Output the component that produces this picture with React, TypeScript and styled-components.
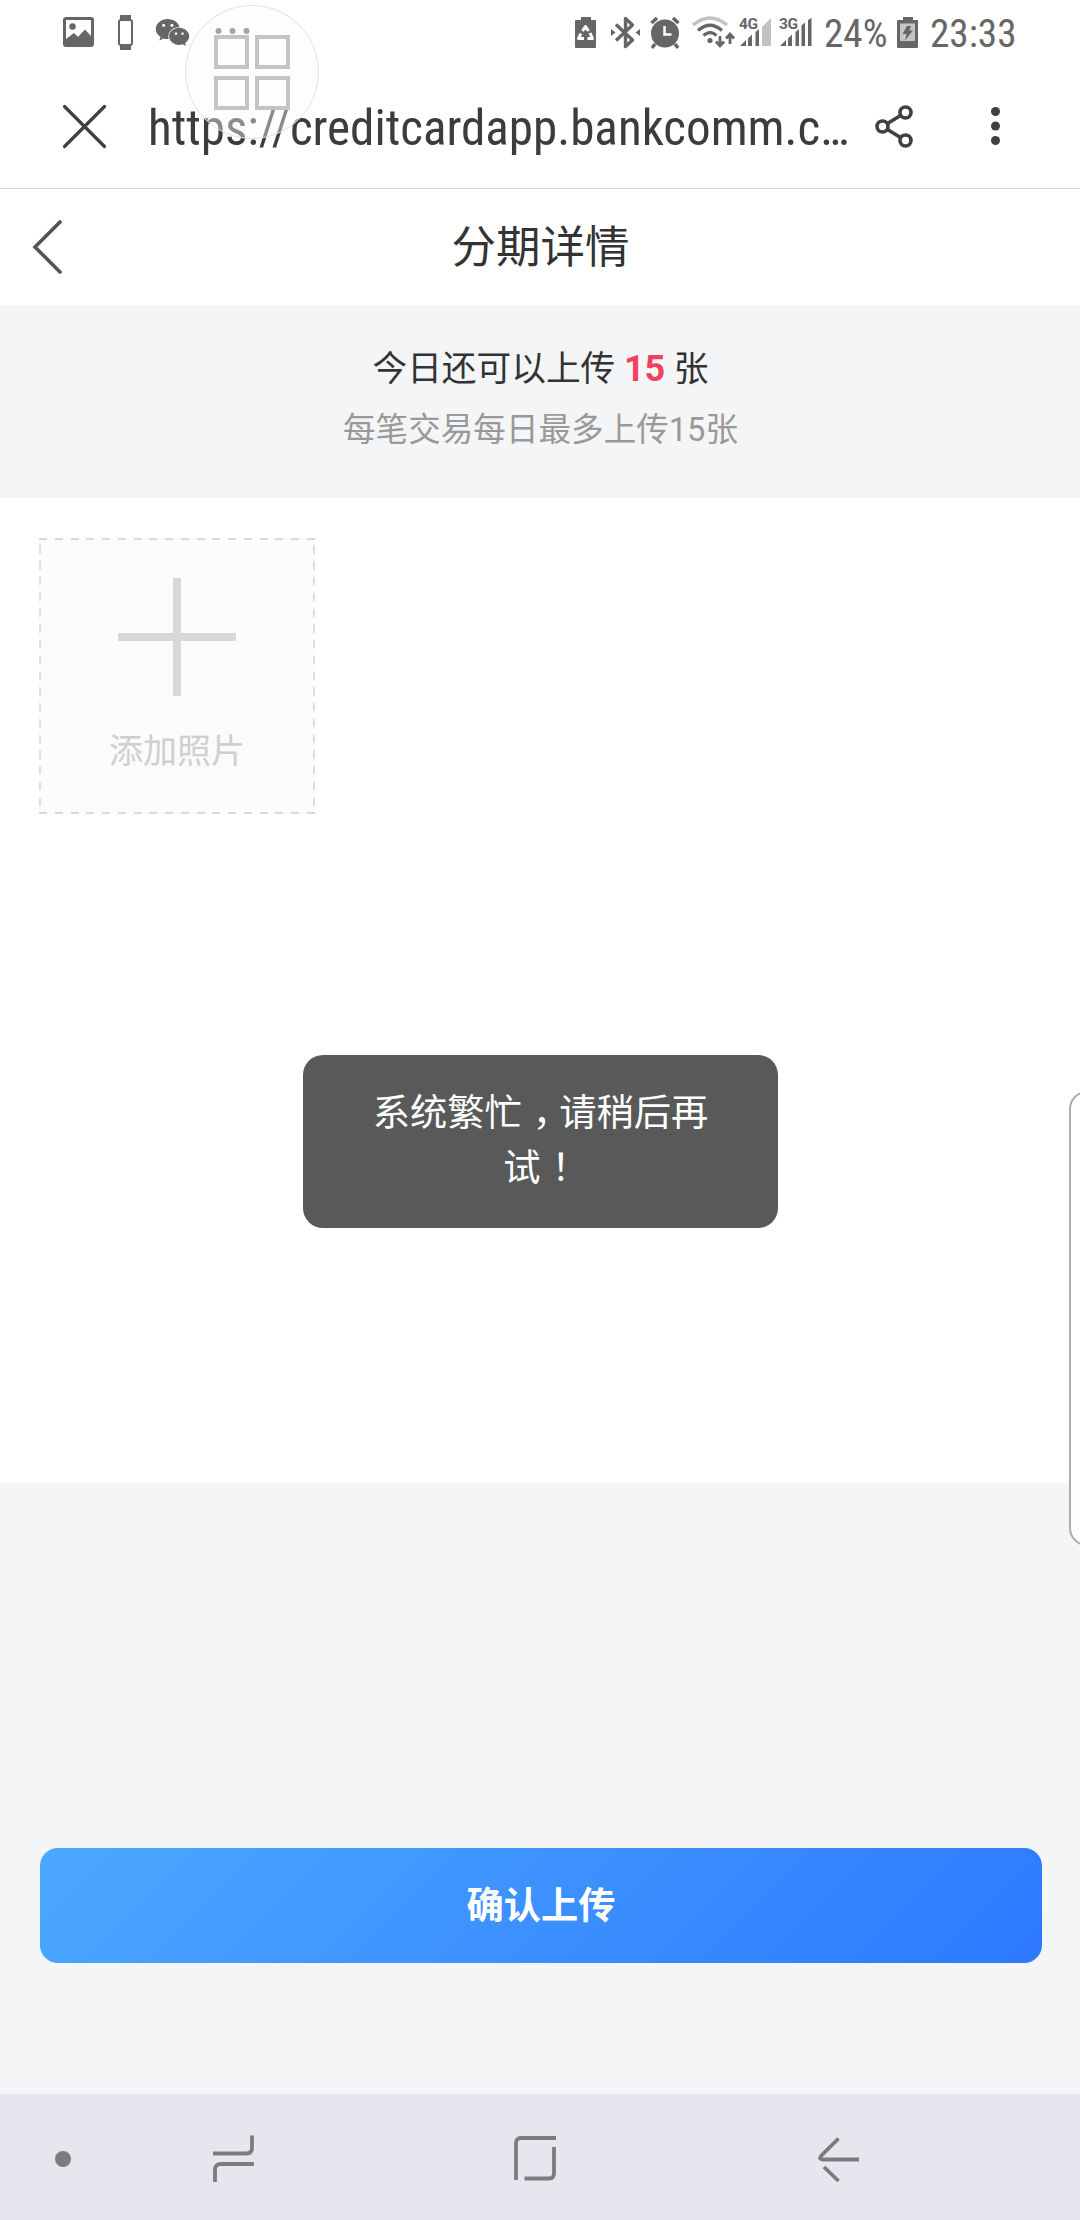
import type { ReactNode } from "react";
import styled, { createGlobalStyle } from "styled-components";
import { FaWeixin } from "react-icons/fa";

const GlobalStyle = createGlobalStyle`
  * {
    box-sizing: border-box;
  }

  body {
    margin: 0;
    background: #f4f5f7;
    font-family: Roboto, "Noto Sans CJK SC", sans-serif;
  }
`;

const Screen = styled.div`
  position: relative;
  display: flex;
  flex-direction: column;
  width: 1080px;
  height: 2220px;
  overflow: hidden;
  background: #f4f5f7;
`;

const StatusBar = styled.div`
  display: flex;
  align-items: center;
  height: 64px;
  padding: 0 68px 0 63px;
  background: #fff;
  color: #666;
`;

const IconBox = styled.span<{ $gap?: number }>`
  display: flex;
  flex: none;
  margin-left: ${({ $gap }) => $gap ?? 0}px;
`;

const Spacer = styled.div`
  flex: 1;
`;

const StatusText = styled.span<{ $width: number; $gap: number }>`
  flex: none;
  width: ${({ $width }) => $width}px;
  margin-left: ${({ $gap }) => $gap}px;
  padding-top: 3px;
  font-family: "Roboto Condensed", Roboto, sans-serif;
  font-stretch: 75%;
  font-size: 39.2px;
  line-height: 64px;
  white-space: nowrap;
`;

const AddressBar = styled.div`
  display: flex;
  align-items: center;
  height: 125px;
  padding: 0 79px 0 63px;
  border-bottom: 1px solid #d6d6d6;
  background: #fff;
  color: #404040;
`;

const Url = styled.div`
  flex: none;
  width: 703px;
  margin-left: 42px;
  padding-top: 4px;
  font-family: "Roboto Condensed", Roboto, sans-serif;
  font-stretch: 75%;
  font-size: 49.1px;
  line-height: 60px;
  white-space: nowrap;
  color: #3c3c3c;
`;

const PageHeader = styled.header`
  display: grid;
  grid-template-columns: 66px 1fr 66px;
  align-items: center;
  height: 116px;
  background: #fff;
`;

const BackButton = styled.button`
  display: flex;
  justify-content: flex-end;
  padding: 0 4px 0 0;
  border: none;
  background: none;
`;

const Title = styled.h1`
  margin: 0;
  padding: 1px 0 0 1px;
  font-size: 44.5px;
  font-weight: 400;
  line-height: 60px;
  text-align: center;
  color: #333;
`;

const Notice = styled.section`
  height: 193px;
  padding: 34px 0 0 1px;
  text-align: center;
`;

const Quota = styled.p`
  margin: 0;
  font-size: 34.7px;
  line-height: 60px;
  color: #333;

  strong {
    font-weight: 700;
    font-size: 36px;
    color: #f0425f;
  }
`;

const QuotaHint = styled.p`
  margin: 1px 0 0;
  font-size: 32.6px;
  line-height: 60px;
  color: #999;
`;

const PhotoPanel = styled.section`
  height: 985px;
  padding: 40px 39px;
  background: #fff;
`;

const AddTile = styled.button`
  display: flex;
  flex-direction: column;
  align-items: center;
  width: 276px;
  height: 276px;
  padding: 40px 0 0;
  border: none;
  color: #cfcfcf;
  font-family: inherit;
  background:
    repeating-linear-gradient(90deg, #d9d9d9 0 8px, transparent 8px 15.76px) 0 0 / 100% 2px no-repeat,
    repeating-linear-gradient(90deg, #d9d9d9 0 8px, transparent 8px 15.76px) 0 100% / 100% 2px no-repeat,
    repeating-linear-gradient(180deg, transparent 0 7.5px, #dedede 7.5px 15.76px) 0 0 / 2px 100% no-repeat,
    repeating-linear-gradient(180deg, transparent 0 7.5px, #dedede 7.5px 15.76px) 100% 0 / 2px 100% no-repeat,
    #fafbfd;
`;

const AddLabel = styled.span`
  margin-top: 25px;
  font-size: 34px;
  line-height: 60px;
`;

const Toast = styled.div`
  position: absolute;
  top: 1055px;
  left: 303px;
  width: 475px;
  height: 173px;
  padding: 31px 60px 0;
  border-radius: 20px;
  background: #595959;
  color: #fff;
  font-size: 37.3px;
  line-height: 55px;
  text-align: center;
`;

/* full-width punctuation centred in its cell */
const Punct = styled.span`
  position: relative;
  left: 11px;
`;

const EdgeHandle = styled.div`
  position: absolute;
  top: 1091px;
  left: 1069px;
  width: 40px;
  height: 455px;
  border: 2px solid #adadad;
  border-radius: 18px;
  background: rgba(255, 255, 255, 0.75);
`;

const Actions = styled.section`
  flex: 1;
  padding: 365px 38px 0 40px;
`;

const ConfirmButton = styled.button`
  width: 100%;
  height: 115px;
  padding: 0 0 6px;
  border: none;
  border-radius: 18px;
  background: linear-gradient(135deg, #4ca9ff 0%, #2d78ff 100%);
  color: #fff;
  font-family: inherit;
  font-size: 37.3px;
  font-weight: 700;
`;

const NavBar = styled.nav`
  display: flex;
  align-items: center;
  height: 126px;
  padding: 0 0 0 55px;
  background: #e6e6ef;
  color: #7c7c7e;
`;

const FloatingGrid = styled.div`
  position: absolute;
  top: 5px;
  left: 185px;
  display: grid;
  grid-template-columns: 35px 35px;
  grid-auto-rows: 34px;
  gap: 7px 6px;
  place-content: center;
  width: 134px;
  height: 134px;
  border: 1px solid #e2e2e2;
  border-radius: 50%;
  background: rgba(250, 250, 250, 0.42);
`;

const GridCell = styled.span`
  border: 4px solid #c4c4c4;
`;

type IconProps = { w: number; h: number; gap?: number; children: ReactNode };

const Icon = ({ w, h, gap, children }: IconProps) => (
  <IconBox $gap={gap}>
    <svg width={w} height={h} viewBox={`0 0 ${w} ${h}`} fill="currentColor" overflow="visible">
      {children}
    </svg>
  </IconBox>
);

const SignalBars = ({ label, faded }: { label: string; faded?: boolean }) => (
  <>
    <text x="-1" y="11" fontSize="15.5" fontWeight="700" fontFamily="Roboto" textLength="19">
      {label}
    </text>
    <path d="M0 28 6 22V28ZM8 20.500 12 16.500V28H8ZM15.500 14 19 11V28H15.500Z" />
    {faded ? (
      <path d="M22 9 31 0V28H22Z" opacity=".4" />
    ) : (
      <path d="M21.500 7.500 25 4.500V28H21.500ZM28 2 31.500 0V28H28Z" />
    )}
  </>
);

const App = () => {
  return (
    <Screen>
      <GlobalStyle />

      <StatusBar>
        <Icon w={31} h={30}>
          <path
            fillRule="evenodd"
            d="M3 0H28Q31 0 31 3V27Q31 30 28 30H3Q0 30 0 27V3Q0 0 3 0ZM3 3V22L11 16 15 20 22 12.500 28 19V3Z"
          />
          <circle cx="9.500" cy="9.500" r="3.200" />
        </Icon>
        <Icon w={15} h={35} gap={24}>
          <path d="M2 0H13V5H2ZM2 30H13V35H2Z" />
          <rect x="1" y="5" width="13" height="25" rx="2" fill="none" stroke="currentColor" strokeWidth="2" />
        </Icon>
        <IconBox $gap={22}>
          <FaWeixin size={35} />
        </IconBox>
        <Icon w={34} h={6} gap={25}>
          <circle cx="3.500" cy="2" r="3" />
          <circle cx="17.500" cy="2" r="3" />
          <circle cx="31.500" cy="2" r="3" />
        </Icon>

        <Spacer />

        <Icon w={21} h={31}>
          <path d="M6 0H16V3H20Q21 3 21 4V30Q21 31 20 31H1Q0 31 0 30V4Q0 3 1 3H6Z" />
          <path
            d="M7.500 14 10.500 9.500 13.500 14M15 16 17.500 21.500H12.500M9 21.500H3.500L6 16.500"
            fill="none"
            stroke="#fff"
            strokeWidth="3"
            strokeLinejoin="round"
          />
        </Icon>
        <Icon w={29} h={33} gap={15}>
          <path
            d="M5 8.500 21.500 24 14.500 30.500V2.500L21.500 9 5 24.500"
            fill="none"
            stroke="currentColor"
            strokeWidth="3.400"
            strokeLinejoin="round"
          />
          <path d="M0 13 4.500 16.500 0 20ZM29 13 24.500 16.500 29 20Z" />
        </Icon>
        <Icon w={30} h={31} gap={10}>
          <circle cx="15" cy="16.500" r="14" />
          <path d="M1.500 6 7 1M28.500 6 23 1M5 27 2 31M25 27 28 31" stroke="currentColor" strokeWidth="3.500" />
          <path d="M14.500 9V17.500H21.500" fill="none" stroke="#fff" strokeWidth="2.500" />
        </Icon>
        <Icon w={42} h={32} gap={12}>
          <g fill="none" stroke="currentColor" strokeWidth="3.200">
            <path d="M1 9Q18 -5 35 9" opacity=".4" />
            <path d="M6 14.500Q18 4 30 14.500M11.500 19.500Q18 13.500 24.500 19.500" />
            <path d="M28 20V29M24 25.500 28 30 32 25.500M38 28V19M34 22.500 38 18 42 22.500" strokeWidth="2.800" />
          </g>
          <circle cx="18" cy="24.500" r="2.600" />
        </Icon>
        <Icon w={31} h={28} gap={6}>
          <SignalBars label="4G" faded />
        </Icon>
        <Icon w={32} h={28} gap={9}>
          <SignalBars label="3G" />
        </Icon>
        <StatusText $width={61} $gap={12}>
          24%
        </StatusText>
        <Icon w={21} h={31} gap={12}>
          <path d="M6 0H16V3H20Q21 3 21 4V30Q21 31 20 31H1Q0 31 0 30V4Q0 3 1 3H6Z" />
          <path d="M3 6.500H18V24H8L6 25 7 24H3Z" fill="#c4c4c4" />
          <path d="M10 9H14L12.500 13.500H16L8 23.500 9.500 17H5.500Z" />
        </Icon>
        <StatusText $width={82} $gap={12}>
          23:33
        </StatusText>
      </StatusBar>

      <AddressBar>
        <Icon w={43} h={43}>
          <path d="M1.500 1.500 41.500 41.500M41.500 1.500 1.500 41.500" stroke="currentColor" strokeWidth="3.200" strokeLinecap="round" />
        </Icon>
        <Url>https://creditcardapp.bankcomm.c…</Url>
        <Icon w={38} h={43} gap={24}>
          <g fill="none" stroke="currentColor" strokeWidth="3.600">
            <circle cx="7.500" cy="21.500" r="5.500" />
            <circle cx="30.500" cy="7.500" r="5.500" />
            <circle cx="30.500" cy="35.500" r="5.500" />
            <path d="M12.500 18.500 25.500 10.500M12.500 24.500 25.500 32.500" />
          </g>
        </Icon>
        <Icon w={10} h={38} gap={78}>
          <circle cx="4.500" cy="4.500" r="4.500" />
          <circle cx="4.500" cy="19" r="4.500" />
          <circle cx="4.500" cy="33.500" r="4.500" />
        </Icon>
      </AddressBar>

      <PageHeader>
        <BackButton aria-label="返回">
          <svg width="30" height="54" viewBox="0 0 30 54" fill="none" stroke="#555" strokeWidth="3.600">
            <path d="M28 2 3 27 28 52" strokeLinecap="round" />
          </svg>
        </BackButton>
        <Title>分期详情</Title>
      </PageHeader>

      <Notice>
        <Quota>
          今日还可以上传 <strong>15</strong> 张
        </Quota>
        <QuotaHint>每笔交易每日最多上传15张</QuotaHint>
      </Notice>

      <PhotoPanel>
        <AddTile>
          <svg width="118" height="118" viewBox="0 0 118 118" fill="#d8d8d8">
            <path d="M55 0H63V55H118V63H63V118H55V63H0V55H55Z" />
          </svg>
          <AddLabel>添加照片</AddLabel>
        </AddTile>
      </PhotoPanel>

      <Actions>
        <ConfirmButton>确认上传</ConfirmButton>
      </Actions>

      <NavBar>
        <Icon w={16} h={16}>
          <circle cx="8" cy="10" r="8" />
        </Icon>
        <Icon w={41} h={46} gap={142}>
          <path
            d="M0 19.500H33Q39 19.500 39 14V1.500M41 30H8Q2 30 2 35.500V48"
            fill="none"
            stroke="currentColor"
            strokeWidth="3.800"
          />
        </Icon>
        <Icon w={42} h={44} gap={260}>
          <path
            d="M2 45V8Q2 3 7 3H42M40 12V38Q40 43.500 35 43.500H10.500"
            fill="none"
            stroke="currentColor"
            strokeWidth="3.800"
          />
        </Icon>
        <Icon w={41} h={45} gap={262}>
          <path
            d="M20.500 3.500 3 21Q.5 24.500 5 24.500H41M6 32 20.500 46"
            fill="none"
            stroke="currentColor"
            strokeWidth="3.800"
          />
        </Icon>
      </NavBar>

      <FloatingGrid>
        <GridCell />
        <GridCell />
        <GridCell />
        <GridCell />
      </FloatingGrid>
      <EdgeHandle />
      <Toast>
        系统繁忙<Punct>{"\uFF0C"}</Punct>请稍后再试<Punct>{"\uFF01"}</Punct>
      </Toast>
    </Screen>
  );
};

export default App;
